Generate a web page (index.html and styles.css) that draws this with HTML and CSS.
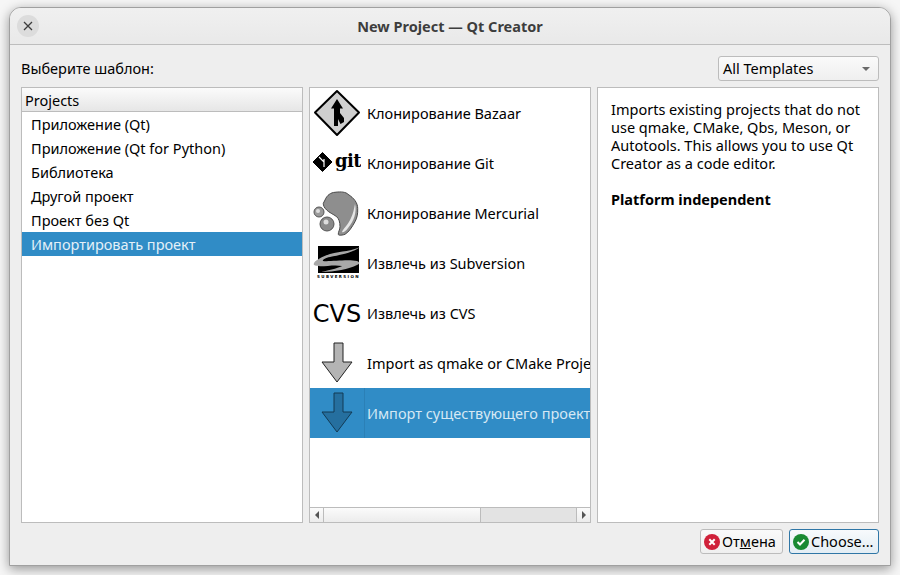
FILE: index.html
```html
<!DOCTYPE html>
<html lang="ru">
<head>
    <meta charset="UTF-8">
    <title>New Project — Qt Creator</title>
    <link rel="stylesheet" href="styles.css">
</head>
<body>
    <div class="window">
        <header class="titlebar">
            <button class="close-btn" aria-label="Close">
                <svg width="10" height="10" viewBox="0 0 10 10"><path d="M1 1L9 9M9 1L1 9" stroke="#3c3c3c" stroke-width="1.3" fill="none"/></svg>
            </button>
            <h1>New Project — Qt Creator</h1>
        </header>

        <div class="content">
            <div class="top-row">
                <span class="choose-label">Выберите шаблон:</span>
                <div class="combo">
                    <span>All Templates</span>
                    <span class="combo-arrow"></span>
                </div>
            </div>

            <div class="panels">
                <div class="panel categories">
                    <div class="panel-head">Projects</div>
                    <ul class="cat-list">
                        <li>Приложение (Qt)</li>
                        <li>Приложение (Qt for Python)</li>
                        <li>Библиотека</li>
                        <li>Другой проект</li>
                        <li>Проект без Qt</li>
                        <li class="selected">Импортировать проект</li>
                    </ul>
                </div>

                <div class="panel templates">
                    <div class="tpl-list">
                        <div class="tpl-row">
                            <span class="tpl-icon">
                                <svg width="48" height="48" viewBox="0 0 48 48">
                                    <path d="M24 2L46 23.500L24 46L2 23.500Z" fill="#cfcfcf" stroke="#000" stroke-width="2" stroke-linejoin="round"/>
                                    <path d="M24 10L30 19.500H27V24L31 29V33L27.500 35L25 30V37H21V19.500H18Z" fill="#000"/>
                                </svg>
                            </span>
                            <span class="tpl-name">Клонирование Bazaar</span>
                        </div>
                        <div class="tpl-row">
                            <span class="tpl-icon">
                                <svg width="48" height="48" viewBox="0 0 48 48">
                                    <path d="M9.500 13.500L19 23L9.500 32.500L0 23Z" fill="#000" stroke="#000" stroke-width="1" stroke-linejoin="round"/>
                                    <path d="M6 18L11 23V28M11 23V20" stroke="#fff" stroke-width="1.200" fill="none"/>
                                    <text class="git-text" x="22" y="28">git</text>
                                </svg>
                            </span>
                            <span class="tpl-name">Клонирование Git</span>
                        </div>
                        <div class="tpl-row">
                            <span class="tpl-icon">
                                <svg width="48" height="48" viewBox="0 0 48 48">
                                    <path d="M12 11C14 6 18 3.500 22 3.300C28 2.500 33 3 35 5.300C41 9 44.700 14 44.700 19.300C45 25 44 29 42 32.700C39 38 36 43 32 45.300C29 46.500 25 46.500 25.300 45.300C25 43 27 41 27 37.700C27 33 26 30 23.700 27.700C20 25 16 23.500 13.700 21C11 18.500 10.300 16.500 10.300 14.300Z" fill="#8e8e8e" stroke="#4a4a4a" stroke-width="1"/>
                                    <path d="M42 15C44 23 41 32 35 39C33 42 30 44 29 43C30 40 35 36 38 29C40 25 41 20 42 15Z" fill="#e6e6e6"/>
                                    <circle cx="6" cy="23" r="5" fill="#9a9a9a" stroke="#555"/>
                                    <circle cx="14" cy="35" r="7" fill="#8a8a8a" stroke="#555"/>
                                    <circle cx="5" cy="22" r="2" fill="#ddd"/>
                                    <circle cx="13" cy="33" r="2.500" fill="#ddd"/>
                                </svg>
                            </span>
                            <span class="tpl-name">Клонирование Mercurial</span>
                        </div>
                        <div class="tpl-row">
                            <span class="tpl-icon">
                                <svg width="48" height="48" viewBox="0 0 48 48">
                                    <rect x="5" y="7" width="41" height="27" fill="#000"/>
                                    <path d="M47 8C40 14 26 16 17 18C12 19 9 21 10 22C16 23 34 20 44 22C47 23 47 25 44 26C36 30 22 33 8 33C18 31 28 28 29 27C20 25 6 29 1 26C-1 23 8 18 17 15C28 12 40 12 47 8Z" fill="#a8a8a8"/>
                                    <text class="svn-text" x="25.500" y="39">SUBVERSION</text>
                                </svg>
                            </span>
                            <span class="tpl-name">Извлечь из Subversion</span>
                        </div>
                        <div class="tpl-row">
                            <span class="tpl-icon">
                                <svg width="48" height="48" viewBox="0 0 48 48">
                                    <text class="cvs-text" x="24" y="33">CVS</text>
                                </svg>
                            </span>
                            <span class="tpl-name">Извлечь из CVS</span>
                        </div>
                        <div class="tpl-row">
                            <span class="tpl-icon">
                                <svg width="48" height="48" viewBox="0 0 48 48">
                                    <path d="M21 4H30V23H39L24 43L9 23H21Z" fill="#b4b4b4" stroke="#222" stroke-width="1"/>
                                </svg>
                            </span>
                            <span class="tpl-name">Import as qmake or CMake Project</span>
                        </div>
                        <div class="tpl-row selected">
                            <span class="tpl-icon">
                                <svg width="48" height="48" viewBox="0 0 48 48">
                                    <path d="M21 4H30V23H39L24 43L9 23H21Z" fill="#256f9f" stroke="#123a54" stroke-width="1"/>
                                </svg>
                            </span>
                            <span class="tpl-name">Импорт существующего проекта</span>
                        </div>
                    </div>
                    <div class="hscroll">
                        <span class="scroll-btn"><span class="arrow-left"></span></span>
                        <span class="scroll-handle"></span>
                        <span class="scroll-groove"></span>
                        <span class="scroll-btn right"><span class="arrow-right"></span></span>
                    </div>
                </div>

                <div class="panel description">
                    <p>Imports existing projects that do not use qmake, CMake, Qbs, Meson, or Autotools. This allows you to use Qt Creator as a code editor.</p>
                    <p class="platform">Platform independent</p>
                </div>
            </div>

            <div class="buttons">
                <button class="btn cancel">
                    <svg width="16" height="16" viewBox="0 0 16 16">
                        <circle cx="8" cy="8" r="8" fill="#d0213a"/>
                        <path d="M5.300 5.300L10.700 10.700M10.700 5.300L5.300 10.700" stroke="#fff" stroke-width="2" fill="none"/>
                    </svg>
                    <span>От<u>м</u>ена</span>
                </button>
                <button class="btn choose">
                    <svg width="16" height="16" viewBox="0 0 16 16">
                        <circle cx="8" cy="8" r="8" fill="#198a33"/>
                        <path d="M4.500 8L7 10.500L11.500 5.800" stroke="#fff" stroke-width="2" fill="none"/>
                    </svg>
                    <span>Choose...</span>
                </button>
            </div>
        </div>
    </div>
</body>
</html>
```

FILE: styles.css
```css
* {
    box-sizing: border-box;
}
body {
    margin: 0;
    height: 575px;
    overflow: hidden;
    background-color: #f6f6f6;
    font-family: 'Noto Sans', sans-serif;
    font-size: 14.5px;
    color: #000;
}
.window {
    margin: 7px 9px 0 9px;
    width: 882px;
    height: 559px;
    display: flex;
    flex-direction: column;
    border: 1px solid #a0a0a0;
    border-radius: 12px 12px 0 0;
    background-color: #eeeeee;
    box-shadow: 0 3px 12px rgba(0,0,0,0.4);
}
.titlebar {
    height: 37px;
    flex: none;
    position: relative;
    display: flex;
    align-items: center;
    justify-content: center;
    background: linear-gradient(#f0f0f0, #e9e9e9);
    border-bottom: 1px solid #bdbdbd;
    border-radius: 11px 11px 0 0;
}
.titlebar h1 {
    margin: 0;
    font-size: 14.5px;
    font-weight: bold;
    color: #3d3d3d;
}
.close-btn {
    position: absolute;
    left: 7px;
    top: 7px;
    width: 22px;
    height: 22px;
    padding: 0;
    border: none;
    border-radius: 50%;
    background-color: #dcdcdc;
    display: flex;
    align-items: center;
    justify-content: center;
}
.content {
    flex: 1;
    display: flex;
    flex-direction: column;
    padding: 11px 11px 11px 11px;
}
.top-row {
    display: flex;
    justify-content: space-between;
    align-items: center;
    height: 25px;
    margin-bottom: 6px;
}
.choose-label {
    padding-bottom: 2px;
}
.combo {
    width: 161px;
    height: 25px;
    display: flex;
    align-items: center;
    justify-content: space-between;
    padding: 0 8px 2px 4px;
    border: 1px solid #bcbcbc;
    border-radius: 3px;
    background: linear-gradient(#fafafa, #efefef);
}
.combo-arrow {
    width: 0;
    height: 0;
    margin-top: 2px;
    border-left: 4px solid transparent;
    border-right: 4px solid transparent;
    border-top: 4px solid #6a6a6a;
}
.panels {
    display: grid;
    grid-template-columns: 282px 282px 282px;
    gap: 6px;
    height: 436px;
}
.panel {
    background: white;
    border: 1px solid #bcbcbc;
    min-width: 0;
    overflow: hidden;
}
.panel-head {
    height: 24px;
    padding-left: 3px;
    line-height: 24px;
    background: linear-gradient(#fbfbfb, #e6e6e6);
    border-bottom: 1px solid #bcbcbc;
}
.cat-list {
    list-style: none;
    margin: 0;
    padding: 0;
}
.cat-list li {
    height: 24px;
    line-height: 24px;
    padding-left: 9px;
}
.cat-list li.selected {
    background-color: #308cc6;
    color: #e4f0f8;
}
.templates {
    display: flex;
    flex-direction: column;
}
.tpl-list {
    flex: 1;
    overflow: hidden;
}
.tpl-row {
    height: 50px;
    display: flex;
    align-items: center;
    white-space: nowrap;
}
.tpl-icon {
    flex: none;
    width: 54px;
    height: 50px;
    padding-left: 3px;
    display: flex;
    align-items: center;
}
.tpl-name {
    padding-left: 3px;
}
.tpl-row.selected {
    background-color: #308cc6;
    color: #d5e8f4;
}
.tpl-row.selected .tpl-name {
    height: 50px;
    line-height: 50px;
    flex: 1;
    border-left: 1px solid #2b80b6;
    padding-left: 2px;
}
.git-text {
    font-family: 'DejaVu Serif', serif;
    font-weight: bold;
    font-size: 18px;
    letter-spacing: -0.6px;
}
.cvs-text {
    font-family: 'DejaVu Sans', sans-serif;
    font-size: 24px;
    text-anchor: middle;
}
.svn-text {
    font-family: 'DejaVu Sans', sans-serif;
    font-weight: bold;
    font-size: 4px;
    letter-spacing: 1.4px;
    text-anchor: middle;
    fill: #000;
}
.hscroll {
    flex: none;
    height: 15px;
    display: flex;
    border-top: 1px solid #bcbcbc;
}
.scroll-btn {
    flex: none;
    width: 14px;
    display: flex;
    align-items: center;
    justify-content: center;
    background: linear-gradient(#fbfbfb, #ececec);
    border-right: 1px solid #bcbcbc;
}
.scroll-btn.right {
    border-right: none;
    border-left: 1px solid #bcbcbc;
}
.scroll-handle {
    flex: none;
    width: 157px;
    background: linear-gradient(#fbfbfb, #ececec);
    border-right: 1px solid #bcbcbc;
}
.scroll-groove {
    flex: 1;
    background-color: #e3e3e3;
}
.arrow-left {
    border-top: 4px solid transparent;
    border-bottom: 4px solid transparent;
    border-right: 4px solid #555;
}
.arrow-right {
    border-top: 4px solid transparent;
    border-bottom: 4px solid transparent;
    border-left: 4px solid #555;
}
.description {
    padding: 12px 13px;
    line-height: 18px;
}
.description p {
    margin: 0;
}
.platform {
    margin-top: 18px !important;
    font-weight: bold;
}
.buttons {
    display: flex;
    justify-content: flex-end;
    gap: 6px;
    margin-top: 6px;
}
.btn {
    height: 25px;
    padding: 0 3px;
    display: flex;
    align-items: center;
    gap: 2px;
    font-family: inherit;
    font-size: 14.5px;
    color: #000;
    border: 1px solid #bcbcbc;
    border-radius: 3px;
    background: linear-gradient(#fafafa, #efefef);
}
.btn span {
    padding-bottom: 2px;
}
.cancel {
    width: 83px;
}
.choose {
    width: 90px;
    border-color: #2f76a6;
    background: linear-gradient(#f7fafc, #e3edf4);
}
```
